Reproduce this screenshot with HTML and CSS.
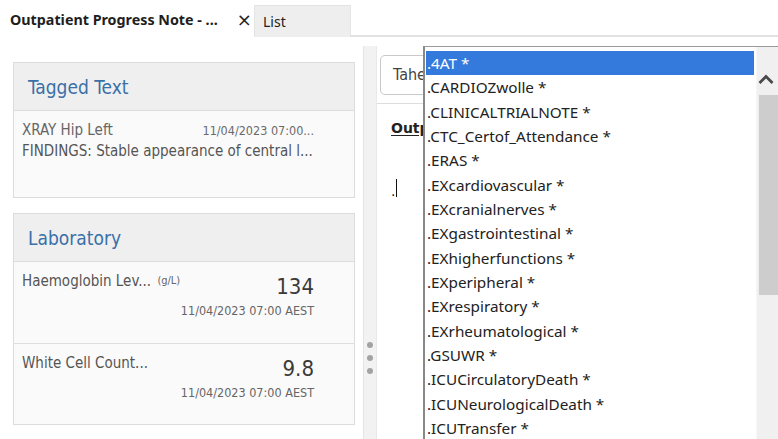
FILE: index.html
```html
<!DOCTYPE html>
<html lang="en">
<head>
<meta charset="utf-8">
<title>Outpatient Progress Note</title>
<link rel="stylesheet" href="styles.css">
</head>
<body>
<div class="app">
  <header class="tabs">
    <div class="tab tab-active">
      <span class="tab-title">Outpatient Progress Note - ...</span>
      <span class="tab-close">×</span>
    </div>
    <div class="tab tab-list">List</div>
    <div class="tab-fill"></div>
  </header>

  <div class="main">
    <aside class="side">
      <section class="card card-tagged">
        <div class="card-head">Tagged Text</div>
        <div class="card-body tagged-body">
          <div class="tagged-line">
            <span class="tagged-name">XRAY Hip Left</span>
            <span class="tagged-date">11/04/2023 07:00...</span>
          </div>
          <div class="tagged-text">FINDINGS: Stable appearance of central l...</div>
        </div>
      </section>

      <section class="card card-lab">
        <div class="card-head">Laboratory</div>
        <div class="lab-row">
          <div class="lab-name">Haemoglobin Lev... <span class="lab-unit">(g/L)</span></div>
          <div class="lab-result">
            <div class="lab-value">134</div>
            <div class="lab-date">11/04/2023 07:00 AEST</div>
          </div>
        </div>
        <div class="lab-row">
          <div class="lab-name">White Cell Count...</div>
          <div class="lab-result">
            <div class="lab-value">9.8</div>
            <div class="lab-date">11/04/2023 07:00 AEST</div>
          </div>
        </div>
      </section>
    </aside>

    <div class="splitter">
      <span class="grip"></span>
      <span class="grip"></span>
      <span class="grip"></span>
    </div>

    <div class="editor">
      <div class="toolbar">
        <div class="font-box">Tahe</div>
      </div>
      <div class="doc">
        <div class="doc-title">Outp</div>
        <div class="doc-line">.<span class="caret"></span></div>
      </div>

      <div class="ac-popup">
        <ul class="ac-list">
          <li class="ac-item ac-selected">.4AT *</li>
          <li class="ac-item">.CARDIOZwolle *</li>
          <li class="ac-item">.CLINICALTRIALNOTE *</li>
          <li class="ac-item">.CTC_Certof_Attendance *</li>
          <li class="ac-item">.ERAS *</li>
          <li class="ac-item">.EXcardiovascular *</li>
          <li class="ac-item">.EXcranialnerves *</li>
          <li class="ac-item">.EXgastrointestinal *</li>
          <li class="ac-item">.EXhigherfunctions *</li>
          <li class="ac-item">.EXperipheral *</li>
          <li class="ac-item">.EXrespiratory *</li>
          <li class="ac-item">.EXrheumatological *</li>
          <li class="ac-item">.GSUWR *</li>
          <li class="ac-item">.ICUCirculatoryDeath *</li>
          <li class="ac-item">.ICUNeurologicalDeath *</li>
          <li class="ac-item">.ICUTransfer *</li>
        </ul>
        <div class="ac-scroll">
          <div class="ac-arrow">
            <svg width="16" height="12" viewBox="0 0 16 12"><path d="M1.5 10 L8 3.5 L14.5 10" fill="none" stroke="#4a4a4a" stroke-width="2.8"/></svg>
          </div>
          <div class="ac-thumb"></div>
        </div>
      </div>
    </div>
  </div>
</div>
</body>
</html>
```

FILE: styles.css
```css
* { box-sizing: border-box; }

html, body {
  margin: 0;
  padding: 0;
  width: 778px;
  height: 439px;
  overflow: hidden;
  background: #ffffff;
}

.app {
  display: flex;
  flex-direction: column;
  height: 439px;
  font-family: "DejaVu Sans Condensed", "DejaVu Sans", sans-serif;
}

/* ---- tab strip ---- */
.tabs {
  display: flex;
  align-items: flex-end;
  height: 37px;
  flex: none;
}

.tab {
  height: 32px;
  display: flex;
  align-items: center;
}

.tab-active {
  width: 254px;
  padding-left: 10px;
  height: 37px;
  padding-top: 1px;
}

.tab-title {
  font-family: "Noto Sans", sans-serif;
  font-weight: 700;
  font-size: 14.3px;
  color: #1e1e1e;
}

.tab-close {
  margin-left: 19px;
  font-family: "DejaVu Sans", sans-serif;
  font-size: 18px;
  color: #222;
}

.tab-list {
  width: 97px;
  padding: 0 0 0 8px;
  background: #eeeeee;
  border: 1px solid #e4e4e4;
  border-bottom: none;
  font-family: "Noto Sans", sans-serif;
  font-size: 14px;
  color: #222;
}

.tab-fill {
  flex: 1;
  height: 1px;
  border-bottom: 2px solid #e2e2e2;
}

/* ---- body ---- */
.main {
  flex: 1;
  display: flex;
  position: relative;
  min-height: 0;
}

.side {
  width: 363px;
  flex: none;
  padding: 25px 8px 0 13px;
  display: flex;
  flex-direction: column;
  gap: 15px;
}

.card {
  border: 1px solid #dcdcdc;
  background: #fafafa;
}

.card-head {
  height: 48px;
  background: #efefef;
  border-bottom: 1px solid #dcdcdc;
  display: flex;
  align-items: center;
  padding-left: 14px;
  font-size: 19px;
  color: #3a6fa8;
}

.tagged-body {
  height: 86px;
  padding: 10px 40px 0 8px;
  color: #5a5a5a;
}

.tagged-line {
  display: flex;
  justify-content: space-between;
  align-items: baseline;
  height: 20px;
}

.tagged-name { font-size: 15px; color: #666; }
.tagged-date { font-size: 12.5px; color: #6a6a6a; }

.tagged-text {
  font-size: 15px;
  line-height: 20px;
  color: #555;
}

.lab-row {
  height: 81px;
  display: flex;
  justify-content: space-between;
  padding: 10px 40px 0 8px;
  border-top: 1px solid #dedede;
}

.card-head + .lab-row { border-top: none; }

.lab-name {
  font-size: 15px;
  color: #555;
}

.lab-unit {
  font-size: 11px;
  color: #666;
  margin-left: 2px;
  vertical-align: 2px;
}

.lab-result {
  display: flex;
  flex-direction: column;
  align-items: flex-end;
}

.lab-value {
  font-size: 22px;
  line-height: 28px;
  color: #3a3a3a;
  margin-top: 1px;
}

.lab-date {
  font-size: 12.5px;
  line-height: 16px;
  color: #666;
  margin-top: 2px;
}

/* ---- splitter ---- */
.splitter {
  width: 14px;
  flex: none;
  margin-top: 9px;
  background: #f2f2f2;
  border-left: 1px solid #e4e4e4;
  border-right: 1px solid #e8e8e8;
  display: flex;
  flex-direction: column;
  align-items: center;
  padding-top: 296px;
  gap: 7px;
}

.grip {
  width: 6px;
  height: 6px;
  border-radius: 50%;
  background: #a3a3a3;
}

/* ---- editor ---- */
.editor {
  flex: 1;
  display: flex;
  flex-direction: column;
}

.toolbar {
  height: 67px;
  flex: none;
  padding: 18px 0 0 3px;
  border-bottom: 1px solid #dddddd;
}

.font-box {
  width: 120px;
  height: 40px;
  border: 1px solid #c9c9c9;
  border-radius: 5px;
  padding: 9px 0 0 12px;
  font-size: 16px;
  color: #444;
}

.doc {
  padding: 16px 0 0 14px;
  font-family: "DejaVu Sans", sans-serif;
}

.doc-title {
  font-weight: 700;
  font-size: 14px;
  color: #222;
  text-decoration: underline;
  text-underline-offset: 2px;
}

.doc-line {
  margin-top: 43px;
  font-size: 14px;
  color: #222;
  display: flex;
  align-items: flex-end;
  height: 20px;
}

.caret {
  display: inline-block;
  width: 1px;
  height: 18px;
  background: #111;
  margin-left: 1px;
  margin-bottom: 2px;
}

/* ---- autocomplete popup ---- */
.ac-popup {
  position: absolute;
  left: 423px;
  top: 9px;
  width: 362px;
  height: 400px;
  background: #ffffff;
  border: 1px solid #9a9a9a;
  border-left: 2px solid #888888;
  display: flex;
}

.ac-list {
  list-style: none;
  margin: 0;
  padding: 4px 2px 0 1px;
  width: 331px;
  flex: none;
  font-family: "Noto Sans", sans-serif;
  font-size: 15.3px;
  color: #222;
}

.ac-item {
  height: 24.33px;
  line-height: 24px;
  padding-left: 1px;
  white-space: nowrap;
}

.ac-selected {
  background: #3479dc;
  color: #ffffff;
}

.ac-scroll {
  flex: 1;
  background: #f0f0f0;
  border-left: 1px solid #f7f7f7;
  display: flex;
  flex-direction: column;
}

.ac-arrow {
  height: 48px;
  display: flex;
  align-items: center;
  justify-content: flex-start;
  padding: 16px 0 0 1px;
}

.ac-thumb {
  height: 200px;
  margin-left: 2px;
  background: #cdcdcd;
}
```
